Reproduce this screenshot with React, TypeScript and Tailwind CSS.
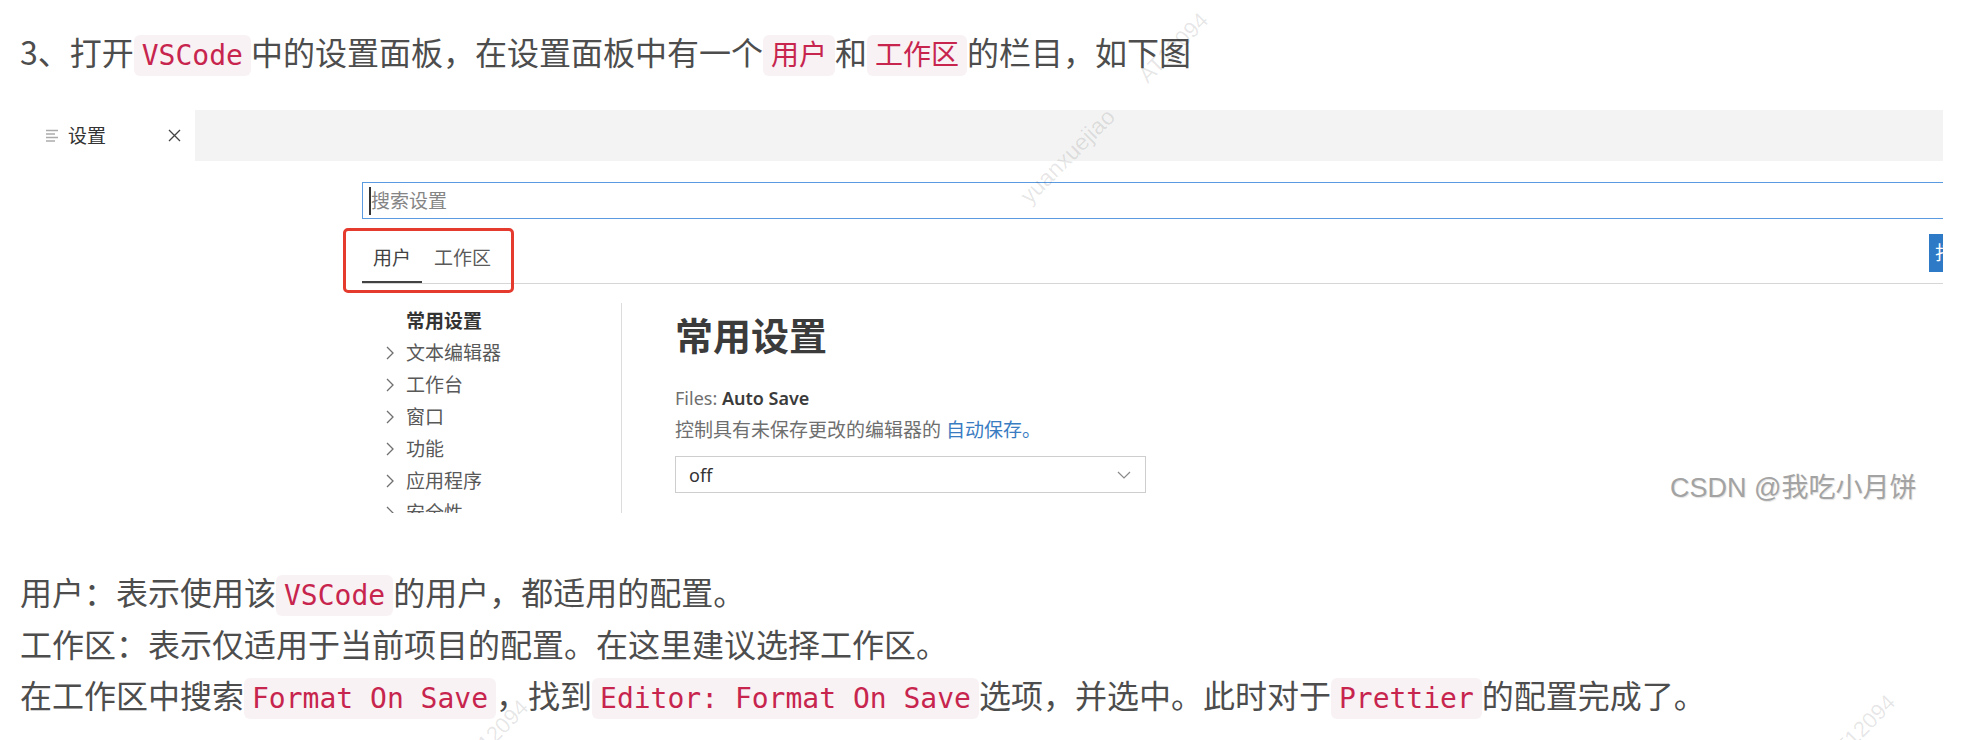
import React from "react";

const code =
  "font-['DejaVu_Sans_Mono','Noto_Sans_CJK_SC',monospace] text-[28px] leading-[20px] text-[#c7254e] bg-[#f9f2f4] px-[8px] py-[4px] rounded-[6px]";

function Chevron() {
  return (
    <svg width="8" height="14" viewBox="0 0 8 14">
      <path d="M1 1l6 6-6 6" fill="none" stroke="#6f6f6f" strokeWidth="1.3" />
    </svg>
  );
}

function NavItem({ label }: { label: string }) {
  return (
    <div className="flex h-[32px] items-center pl-[24px]">
      <Chevron />
      <span className="ml-[12px] text-[19px] leading-[24px] text-[#595959]">{label}</span>
    </div>
  );
}

function Shot() {
  return (
    <div className="relative mt-[33px] h-[403px] w-[1923px] overflow-hidden bg-white font-['Noto_Sans','Noto_Sans_CJK_SC',sans-serif]">
      {/* tab strip */}
      <div className="flex h-[51px]">
        <div className="flex w-[175px] items-center bg-white">
          <svg className="ml-[26px]" width="13" height="14" viewBox="0 0 13 14">
            <g stroke="#ababab" strokeWidth="1.5">
              <line x1="0" y1="1.5" x2="12" y2="1.5" />
              <line x1="0" y1="5" x2="9" y2="5" />
              <line x1="0" y1="8.5" x2="12" y2="8.5" />
              <line x1="0" y1="12" x2="9" y2="12" />
            </g>
          </svg>
          <span className="ml-[9px] text-[19px] leading-[24px] text-[#333333]">设置</span>
          <svg className="ml-[62px]" width="13" height="13" viewBox="0 0 13 13">
            <path d="M1 1L12 12M12 1L1 12" stroke="#444444" strokeWidth="1.3" />
          </svg>
        </div>
        <div className="flex-1 bg-[#f3f3f3]" />
      </div>

      <div className="pl-[342px]">
        <div className="w-[1717px]">
          {/* search */}
          <div className="mt-[21px] flex h-[37px] items-center border border-[#5a9ae0]">
            <div className="ml-[6px] h-[28px] w-[2px] bg-[#333333]" />
            <span className="text-[19px] leading-[24px] text-[#858585]">搜索设置</span>
          </div>

          {/* scope tabs */}
          <div className="flex items-start border-b border-[#d6d6d6]">
            <div className="border-b-2 border-[#424242] px-[11px] pb-[10px] pt-[26px] text-[19px] leading-[26px] text-[#424242]">
              用户
            </div>
            <div className="px-[12px] pb-[12px] pt-[26px] text-[19px] leading-[26px] text-[#5a5a5a]">
              工作区
            </div>
            <div className="ml-auto mt-[15px] flex h-[38px] w-[150px] items-center bg-[#2f7ac6] pl-[6px] text-[19px] text-white">
              打开设置
            </div>
          </div>

          {/* body */}
          <div className="mt-[19px] flex">
            <div className="h-[300px] w-[260px] border-r border-[#dcdcdc] pt-[2px]">
              <div className="flex h-[32px] items-center pl-[44px]">
                <span className="text-[19px] font-bold leading-[24px] text-[#333333]">常用设置</span>
              </div>
              <NavItem label="文本编辑器" />
              <NavItem label="工作台" />
              <NavItem label="窗口" />
              <NavItem label="功能" />
              <NavItem label="应用程序" />
              <NavItem label="安全性" />
            </div>
            <div className="pl-[53px] pt-[8px]">
              <div className="text-[38px] font-bold leading-[48px] text-[#3b3b3b]">常用设置</div>
              <div className="mt-[27px] text-[18px] leading-[24px]">
                <span className="text-[#6f6f6f]">Files: </span>
                <span className="font-semibold text-[#3b3b3b]">Auto Save</span>
              </div>
              <div className="mt-[8px] text-[19px] leading-[24px] text-[#6f6f6f]">
                控制具有未保存更改的编辑器的 <span className="text-[#3a7cc2]">自动保存。</span>
              </div>
              <div className="mt-[14px] flex h-[37px] w-[471px] items-center justify-between border border-[#cecece] pl-[13px] pr-[14px]">
                <span className="text-[18px] leading-[24px] text-[#333333]">off</span>
                <svg width="14" height="8" viewBox="0 0 14 8">
                  <path d="M1 1l6 6 6-6" fill="none" stroke="#8a8a8a" strokeWidth="1.2" />
                </svg>
              </div>
            </div>
          </div>
        </div>
      </div>

      {/* red annotation */}
      <div className="absolute left-[323px] top-[118px] h-[65px] w-[171px] rounded-[5px] border-[3px] border-[#e53b2f]" />

      {/* csdn watermark */}
      <div className="absolute left-[1650px] top-[362px] whitespace-nowrap font-['Liberation_Sans','Noto_Sans_CJK_SC',sans-serif] text-[27px] leading-[32px] text-[#a3a3a3] [text-shadow:1px_1px_1px_rgba(0,0,0,0.12)]">
        CSDN @我吃小月饼
      </div>
    </div>
  );
}

export default function App() {
  return (
    <div className="relative h-[740px] w-[1962px] overflow-hidden bg-white font-['Noto_Sans_CJK_SC',sans-serif] text-[#4d4d4d]">
      <div className="pl-[20px] pt-[25px]">
        <p className="text-[32px] leading-[52px]">
          3、打开<code className={code}>VSCode</code>中的设置面板，在设置面板中有一个<code className={code}>用户</code>和
          <code className={code}>工作区</code>的栏目，如下图
        </p>

        <Shot />

        <div className="mt-[53px] text-[32px] leading-[51.5px]">
          <p>
            用户：表示使用该<code className={code}>VSCode</code>的用户，都适用的配置。
          </p>
          <p>工作区：表示仅适用于当前项目的配置。在这里建议选择工作区。</p>
          <p>
            在工作区中搜索<code className={code}>Format On Save</code>，找到
            <code className={code}>Editor: Format On Save</code>选项，并选中。此时对于
            <code className={code}>Prettier</code>的配置完成了。
          </p>
        </div>
      </div>

      {/* page watermarks */}
      <span className="pointer-events-none absolute left-[1006px] top-[145px] -rotate-45 whitespace-nowrap font-['Liberation_Sans',sans-serif] text-[23px] leading-[22px] text-black/10">
        yuanxuejiao
      </span>
      <span className="pointer-events-none absolute left-[1130px] top-[37px] -rotate-45 whitespace-nowrap font-['Liberation_Sans',sans-serif] text-[22px] leading-[22px] text-black/10">
        AT12094
      </span>
      <span className="pointer-events-none absolute left-[450px] top-[724px] -rotate-45 whitespace-nowrap font-['Liberation_Sans',sans-serif] text-[22px] leading-[22px] text-black/10">
        AT12094
      </span>
      <span className="pointer-events-none absolute left-[1817px] top-[719px] -rotate-45 whitespace-nowrap font-['Liberation_Sans',sans-serif] text-[22px] leading-[22px] text-black/10">
        AT12094
      </span>
    </div>
  );
}
